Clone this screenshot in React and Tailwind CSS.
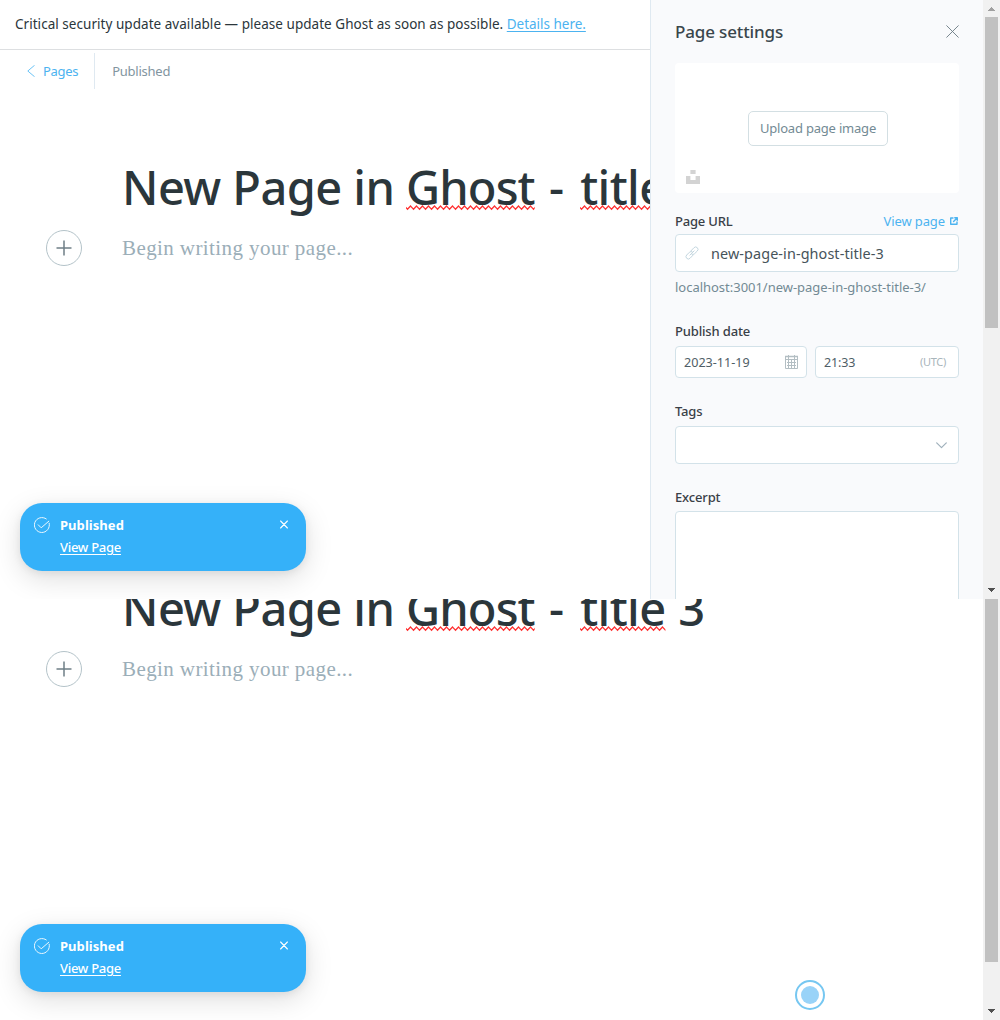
import React from 'react';

const stroke = { fill: 'none', stroke: 'currentColor', strokeLinecap: 'round', strokeLinejoin: 'round' };

function Misspelled({ id, className, children }) {
  return (
    <span className={`relative inline-block ${className}`}>
      {children}
      <svg className="absolute left-0 top-[49px] h-[6px] w-full" aria-hidden="true">
        <defs>
          <pattern id={id} width="6" height="6" patternUnits="userSpaceOnUse">
            <path d="M-1.5 1L1.5 4.2L4.5 1L7.5 4.2" fill="none" stroke="#ff3030" strokeWidth="1.3" />
          </pattern>
        </defs>
        <rect width="100%" height="6" fill={`url(#${id})`} />
      </svg>
    </span>
  );
}

function Editor({ name }) {
  return (
    <div className="pl-[46px]">
      <h1 className="ml-[76px] h-[62px] whitespace-pre text-[47px] font-medium leading-[62px] text-[#2b363b]">
        <span className="tracking-[-0.58px]">{'New Page in '}</span>
        <Misspelled id={`${name}-a`} className="tracking-[-0.9px]">Ghost</Misspelled>
        <span className="tracking-[2px]">{' - '}</span>
        <Misspelled id={`${name}-b`} className="tracking-[-0.6px]">title</Misspelled>
        <span className="tracking-[0.5px]">{' 3'}</span>
      </h1>
      <div className="mt-3 flex h-9 items-center">
        <button className="flex size-9 shrink-0 items-center justify-center rounded-full border border-[#b4c3c9]">
          <svg width="16" height="16" viewBox="0 0 16 16" fill="none" stroke="#6f7f87" strokeWidth="1.5">
            <path d="M8 .5v15M.5 8h15" />
          </svg>
        </button>
        <p className="ml-10 whitespace-nowrap font-['Liberation_Serif',serif] text-[21px] leading-9 tracking-[0.41px] text-[#9baeb8]">
          Begin writing your page...
        </p>
      </div>
    </div>
  );
}

function Toast({ position }) {
  return (
    <div className={`absolute left-5 flex h-[68px] w-[286px] items-start rounded-[22px] bg-[#35b1f9] pl-3.5 pr-[18px] pt-3 text-white shadow-[0_8px_28px_rgba(0,0,0,0.13),0_2px_8px_rgba(0,0,0,0.07)] ${position}`}>
      <svg className="mt-0.5 shrink-0 opacity-90" width="16" height="16" viewBox="0 0 16 16" {...stroke} strokeWidth="1">
        <path d="M15.2 6.200A7.500 7.500 0 1 1 12.300 1.900M4.200 7.800l3 3 7.600-6.600" />
      </svg>
      <div className="ml-2.5 text-[13px] leading-5">
        <div className="font-bold tracking-[0.05px]">Published</div>
        <a className="mt-0.5 block font-medium tracking-[-0.28px] underline underline-offset-2">View Page</a>
      </div>
      <svg className="ml-auto mt-[5px]" width="8" height="9" viewBox="0 0 8 9" {...stroke} strokeWidth="1.1">
        <path d="M.6 1l6.800 7M7.400 1L.6 8" />
      </svg>
    </div>
  );
}

function Arrow({ up, color }) {
  return (
    <div className="flex h-[17px] items-center justify-center">
      <svg width="7" height="4" viewBox="0 0 7 4" fill={color} shapeRendering="crispEdges">
        <path d={up ? 'M0 4h7L3.5 0z' : 'M0 0h7L3.5 4z'} />
      </svg>
    </div>
  );
}

const label = 'text-[13px] font-medium leading-5 text-[#394047]';
const field = 'rounded-[4px] border border-[#d3e2e9] bg-white';

function Settings() {
  return (
    <aside className="w-[333px] shrink-0 border-l border-[#dfe9f1] bg-[#f9fafc] px-6">
      <div className="flex h-[63px] items-center justify-between">
        <h2 className="text-[17px] font-medium tracking-[-0.14px] text-[#3a464c]">Page settings</h2>
        <svg className="-mt-px" width="13" height="13" viewBox="0 0 13 13" {...stroke} stroke="#6a7982" strokeWidth="0.9">
          <path d="M.7.7l11.600 11.600M12.300.7L.7 12.300" />
        </svg>
      </div>
      <div className="relative flex h-[130px] items-center justify-center rounded-[4px] bg-white pl-0.5">
        <button className="h-[35px] w-[140px] rounded-[5px] border border-[#d3dfe3] pt-0.5 text-[13px] tracking-[-0.2px] text-[#738a94]">
          Upload page image
        </button>
        <svg className="absolute bottom-[9px] left-[11px]" width="14" height="14" viewBox="0 0 14 14" fill="#d3d3d3">
          <path d="M4.400 0h5.200v4H4.400zM0 6h4.400v4h5.200V6H14v8H0z" />
        </svg>
      </div>
      <div className="mt-[17px] flex h-[22px] items-center justify-between">
        <span className={`${label} -mt-px tracking-[-0.2px]`}>Page URL</span>
        <a className="mr-px flex items-center gap-[5px] text-[13px] leading-5 tracking-[-0.1px] text-[#4cb3f0]">
          View page
          <svg width="8" height="8" viewBox="0 0 8 8" {...stroke} strokeWidth="1.4">
            <path d="M3 1H.7v6.300H7V5M4.800.7h2.500v2.500M7.200.8L3.600 4.400" />
          </svg>
        </a>
      </div>
      <div className={`${field} mt-0.5 flex h-[38px] items-center pl-[9px]`}>
        <svg className="text-[#c3d6df]" width="14" height="14" viewBox="0 0 14 14" {...stroke} strokeWidth="1">
          <path d="M4.900 9.100l4.200-4.200M6 4.800L9 1.700a2.300 2.300 0 0 1 3.300 0 2.300 2.300 0 0 1 0 3.300L9.600 7.700a2.300 2.300 0 0 1-3.200.2M8 9.200L5 12.300a2.300 2.300 0 0 1-3.300 0 2.300 2.300 0 0 1 0-3.300l2.700-2.700a2.300 2.300 0 0 1 3.200-.2" />
        </svg>
        <span className="ml-3 mt-0.5 text-[14.4px] tracking-[0.1px] text-[#46535a]">new-page-in-ghost-title-3</span>
      </div>
      <p className="mt-[5px] text-[13px] leading-5 tracking-[-0.02px] text-[#738a94]">localhost:3001/new-page-in-ghost-title-3/</p>
      <div className={`${label} mt-6 tracking-[-0.16px]`}>Publish date</div>
      <div className="mt-[5px] flex gap-2">
        <div className={`${field} flex h-8 w-[132px] items-center justify-between px-2`}>
          <span className="mt-0.5 text-[12.6px] text-[#4f5e66]">2023-11-19</span>
          <svg width="13" height="14" viewBox="0 0 13 14" fill="none" stroke="#b3bec3" strokeWidth="1">
            <path d="M0 1.500h13" strokeWidth="1.500" />
            <path d="M.5 1v12.500h12V1M.5 4.500h12M3.500 0v13M6.500 4v9M9.500 0v13M2 7.500h9M2 10.500h9" />
          </svg>
        </div>
        <div className={`${field} flex h-8 flex-1 items-center justify-between pl-2 pr-3`}>
          <span className="mt-0.5 text-[12.5px] tracking-[-0.15px] text-[#4f5e66]">21:33</span>
          <span className="text-[11px] tracking-[-0.3px] text-[#a9b5bb]">(UTC)</span>
        </div>
      </div>
      <div className={`${label} mt-[23px] tracking-[-0.2px]`}>Tags</div>
      <div className={`${field} mt-[5px] flex h-[38px] items-center justify-end pr-[11px]`}>
        <svg width="11" height="7" viewBox="0 0 11 7" {...stroke} stroke="#9fb0bb" strokeWidth="1.2">
          <path d="M.7.9l4.800 4.800L10.300.9" />
        </svg>
      </div>
      <div className={`${label} mt-[23px] tracking-[-0.15px]`}>Excerpt</div>
      <div className={`${field} mt-1 h-[120px]`} />
    </aside>
  );
}

export default function App() {
  return (
    <div className="h-[1020px] w-[1000px] overflow-hidden bg-white font-['Noto_Sans',sans-serif]">
      <section className="relative flex h-[599px] overflow-hidden">
        <main className="w-[650px] shrink-0 overflow-hidden">
          <div className="flex h-[50px] items-center whitespace-pre border-b border-[#dddfe1] pl-[15px] text-[13.5px] tracking-[0.04px] text-[#2b363b]">
            {'Critical security update available — please update Ghost as soon as possible. '}
            <a className="tracking-[-0.02px] text-[#4cb3f0] underline underline-offset-2">Details here.</a>
          </div>
          <div className="flex h-[43px] items-center pl-[27px] text-[13px]">
            <svg className="-mt-px" width="8" height="12" viewBox="0 0 8 12" {...stroke} stroke="#6bc3f5" strokeWidth="1">
              <path d="M7.300.5L.8 6l6.500 5.500" />
            </svg>
            <span className="ml-2 tracking-[-0.3px] text-[#4cb3f0]">Pages</span>
            <span className="-mt-px ml-4 h-9 w-px bg-[#dfe9f1]" />
            <span className="ml-[17px] tracking-[-0.25px] text-[#8295a0]">Published</span>
          </div>
          <div className="pt-[63px]">
            <Editor name="top" />
          </div>
        </main>
        <Settings />
        <div className="flex w-[17px] flex-col bg-[#f1f1f1]">
          <Arrow up color="#a0a0a0" />
          <div className="mx-auto h-[311px] w-[13px] bg-[#c1c1c1]" />
          <div className="mt-auto pb-px"><Arrow color="#505050" /></div>
        </div>
        <Toast position="top-[503px]" />
      </section>
      <section className="relative flex h-[421px] overflow-hidden">
        <main className="w-[983px] shrink-0 overflow-hidden">
          <div className="-mt-[22px]">
            <Editor name="bottom" />
          </div>
        </main>
        <div className="flex w-[17px] flex-col bg-[#f1f1f1]">
          <div className="mx-auto h-[363px] w-[13px] bg-[#c1c1c1]" />
          <div className="mt-auto pb-px"><Arrow color="#505050" /></div>
        </div>
        <Toast position="top-[325px]" />
        <div className="absolute left-[795px] top-[381px] flex size-[30px] items-center justify-center rounded-full border-2 border-[#76c7f1] bg-white">
          <div className="size-[18px] rounded-full bg-[#99d3f8]" />
        </div>
      </section>
    </div>
  );
}
